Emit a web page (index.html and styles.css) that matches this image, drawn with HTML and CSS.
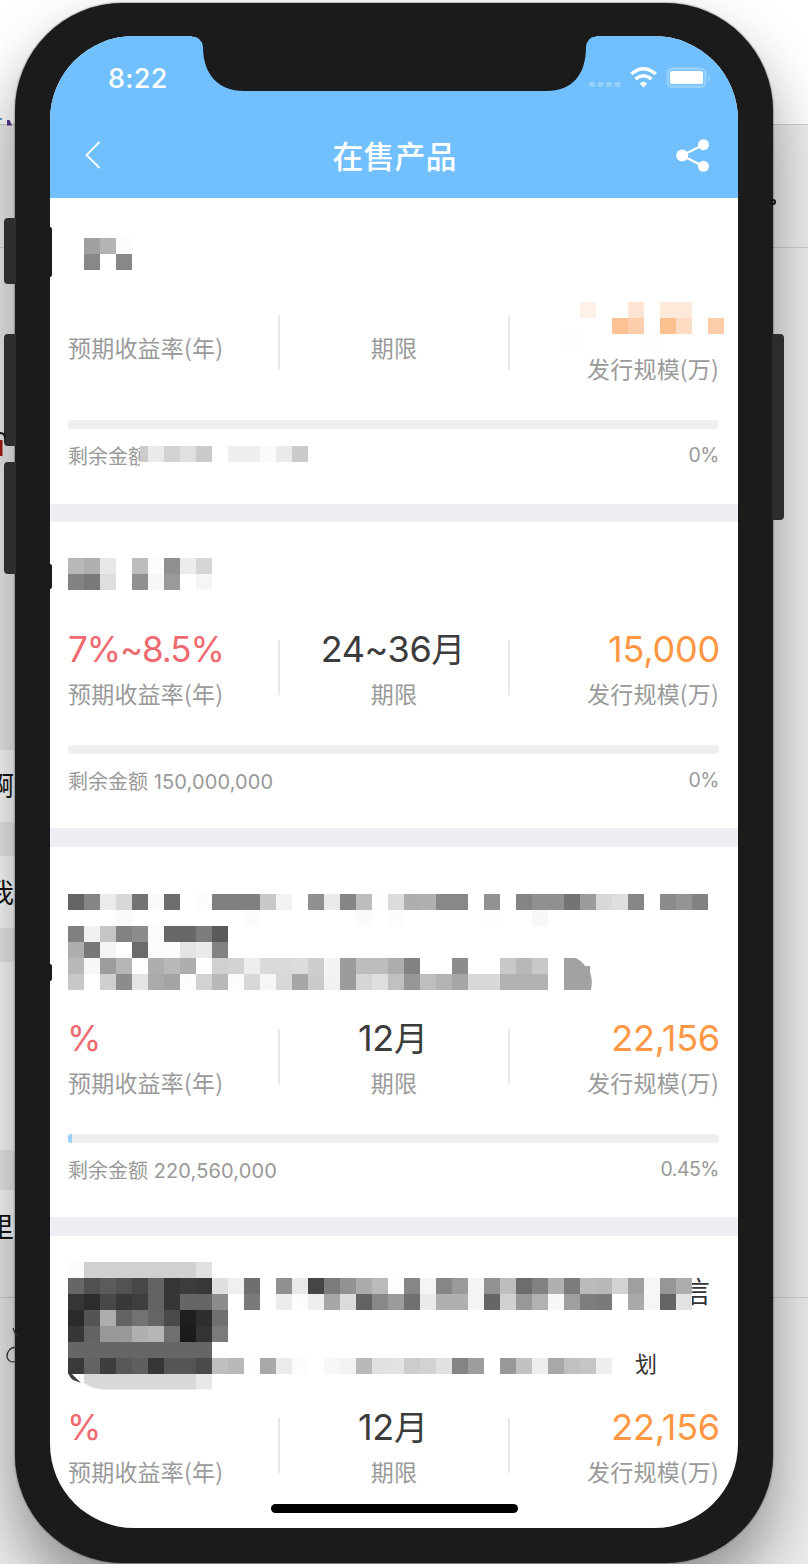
FILE: index.html
```html
<!DOCTYPE html>
<html lang="zh-CN">
<head>
<meta charset="utf-8">
<title>在售产品</title>
<link rel="stylesheet" href="styles.css">
</head>
<body>
<div class="desktop">
  <div class="backdrop">
    <i class="band band-a"></i><i class="band band-b"></i><i class="band band-c"></i><i class="band band-d"></i>
    <i class="rule rule-a"></i><i class="rule rule-b"></i><i class="rule rule-c"></i>
  </div>
  <div class="phone">
    <i class="key key-mute"></i><i class="key key-up"></i><i class="key key-down"></i><i class="key key-power"></i>
    <div class="screen">
      <header class="header">
        <div class="status">
          <span class="time">8:22</span>
          <span class="indicators">
            <svg width="124" height="26" viewBox="0 0 124 26">
              <g fill="#fff" fill-opacity=".25"><rect x="1" y="17" width="6" height="5" rx="1.500"/><rect x="9.500" y="17" width="6" height="5" rx="1.500"/><rect x="18" y="17" width="6" height="5" rx="1.500"/><rect x="26.500" y="17" width="6" height="5" rx="1.500"/></g>
              <g fill="none" stroke="#fff" stroke-width="3.600"><path d="M43.300 9Q55.500-1.500 67.700 9"/><path d="M47.500 14Q55.500 7.500 63.500 14"/></g>
              <path fill="#fff" d="M51.800 18.500Q55.500 15 59.200 18.500L55.500 22.500Z"/>
              <rect x="79.500" y="3.500" width="38" height="18.500" rx="4.500" fill="#fff" fill-opacity=".1" stroke="#fff" stroke-opacity=".25" stroke-width="2"/>
              <rect x="82" y="6" width="33" height="13" rx="2" fill="#fff"/>
              <path d="M120.500 9.500Q124 13 120.500 16.500Z" fill="#fff" fill-opacity=".35"/>
            </svg>
          </span>
        </div>
        <div class="navbar">
          <svg class="back" width="18" height="30" viewBox="0 0 18 30"><path d="M15.500 2L2.500 15l13 13" fill="none" stroke="#fff" stroke-width="1.800"/></svg>
          <h1>在售产品</h1>
          <svg class="share" width="34" height="34" viewBox="0 0 34 34"><path d="M28 6.500L6 17.500l22 11" fill="none" stroke="#fff" stroke-width="2.200"/><g fill="#fff"><circle cx="27.500" cy="6.700" r="5.500"/><circle cx="6.200" cy="17.500" r="6"/><circle cx="27.500" cy="28.300" r="5.500"/></g></svg>
        </div>
      </header>
      <main>
        <section class="card card-first">
          <div class="heading"></div>
          <div class="stats">
            <div class="stat stat-empty"><span class="label">预期收益率(年)</span></div><i class="divider"></i>
            <div class="stat stat-mid stat-empty"><span class="label">期限</span></div><i class="divider"></i>
            <div class="stat stat-end"><b class="value"></b><span class="label">发行规模(万)</span></div>
          </div>
          <div class="bar"></div>
          <div class="foot"><span class="remain">剩余金额</span><span class="percent">0%</span></div>
          <svg class="mosaic" data-name="first"></svg>
        </section>
        <section class="card">
          <div class="heading"></div>
          <div class="stats">
            <div class="stat"><b class="value rate">7%~8.5%</b><span class="label">预期收益率(年)</span></div><i class="divider"></i>
            <div class="stat stat-mid"><b class="value">24~36<span class="month">月</span></b><span class="label">期限</span></div><i class="divider"></i>
            <div class="stat stat-end"><b class="value scale">15,000</b><span class="label">发行规模(万)</span></div>
          </div>
          <div class="bar"></div>
          <div class="foot"><span class="remain">剩余金额 <span class="num">150,000,000</span></span><span class="percent">0%</span></div>
          <svg class="mosaic" data-name="second"></svg>
        </section>
        <section class="card card-tall">
          <div class="heading"></div>
          <div class="stats">
            <div class="stat"><b class="value rate rate-bare">%</b><span class="label">预期收益率(年)</span></div><i class="divider"></i>
            <div class="stat stat-mid"><b class="value">12<span class="month">月</span></b><span class="label">期限</span></div><i class="divider"></i>
            <div class="stat stat-end"><b class="value scale">22,156</b><span class="label">发行规模(万)</span></div>
          </div>
          <div class="bar"><i class="fill" style="width:0.45%"></i></div>
          <div class="foot"><span class="remain">剩余金额 <span class="num">220,560,000</span></span><span class="percent">0.45%</span></div>
          <svg class="mosaic" data-name="third"><path d="M496 111h12q6 3 9 8h5v6q3 8 1 18h-27z" fill="#a2a2a2"/></svg>
        </section>
        <section class="card card-tall card-last">
          <div class="heading"><span class="word word-top">信</span><span class="word word-low">划</span></div>
          <div class="stats">
            <div class="stat"><b class="value rate rate-bare">%</b><span class="label">预期收益率(年)</span></div><i class="divider"></i>
            <div class="stat stat-mid"><b class="value">12<span class="month">月</span></b><span class="label">期限</span></div><i class="divider"></i>
            <div class="stat stat-end"><b class="value scale">22,156</b><span class="label">发行规模(万)</span></div>
          </div>
          <svg class="mosaic" data-name="fourth"><path d="M16 138h112v15.500H34Q23 152 16 147z" fill="#d8d8d8"/><path d="M128 138h16v15.500h-16z" fill="#e8e8e8"/><path d="M0 134l13 13-8-3q-5-4-5-10z" fill="#444"/></svg>
        </section>
      </main>
      <svg class="notch" width="420" height="58" viewBox="0 0 420 58"><path d="M8 0v.5Q18 1 19 11C19 38 34 55 60 55H362C389 55 402 38 402 11Q403 1 412 .500V0Z" fill="#1b1b1b"/></svg>
      <i class="home"></i>
    </div>
    <i class="nub nub-a"></i><i class="nub nub-b"></i><i class="nub nub-c"></i>
  </div>
  <span class="peek peek-a">啊</span><span class="peek peek-b">我</span><span class="peek peek-c">里</span>
  <svg class="marks" width="808" height="1564" viewBox="0 0 808 1564">
    <path d="M0 118h2v2H0z" fill="#4a83bd"/><path d="M7 120h2.500l2.500 5.500H7z" fill="#4b2c7c"/>
    <path d="M0 433q5 0 5 5" stroke="#111" stroke-width="2" fill="none"/><path d="M0 440h2.500v16H0z" fill="#8e1510"/>
    <circle cx="773" cy="202" r="2" fill="none" stroke="#111" stroke-width="2"/>
    <path d="M13 1328q2 6 4 8M16 1347q-9 1-9 10 2 7 9 4" stroke="#333" stroke-width="1.300" fill="none"/>
  </svg>
</div>
<script src="mosaic.js"></script>
</body>
</html>
```
FILE: styles.css
```css
* { box-sizing: border-box; }
body { margin: 0; background: #fff; font-family: Inter, "Noto Sans CJK SC", sans-serif; }
i { font-style: normal; }
.desktop { position: relative; width: 808px; height: 1564px; overflow: hidden; padding: 3px 35px 0 15px; background: #fff; }
.backdrop { position: absolute; inset: 0; background: linear-gradient(#fff 0 124px, #ededed 124px); }
.band { position: absolute; left: 0; width: 15px; background: #fff; }
.band-a { top: 750px; height: 72px; }
.band-b { top: 856px; height: 72px; }
.band-c { top: 962px; height: 188px; }
.band-d { top: 1190px; height: 46px; }
.rule { position: absolute; left: 0; right: 0; height: 1px; background: #cfcfcf; }
.rule-a { top: 124px; }
.rule-b { top: 247px; }
.rule-c { top: 1297px; }

.phone { position: relative; width: 758px; height: 1560px; padding: 33px 35px; border-radius: 108px; background: #1b1b1b; box-shadow: 0 0 2px #333, 0 34px 62px rgba(0, 0, 0, .4); }
.key { position: absolute; width: 12px; background: #2d2d2d; left: -11px; border-radius: 4px 0 0 4px; }
.key-mute { top: 215px; height: 66px; }
.key-up { top: 331px; height: 112px; }
.key-down { top: 459px; height: 112px; }
.key-power { left: 757px; top: 331px; height: 186px; border-radius: 0 4px 4px 0; }
.nub { position: absolute; left: 34px; width: 3px; background: #1b1b1b; border-radius: 0 2px 2px 0; }
.nub-a { top: 224px; height: 50px; }
.nub-b { top: 561px; height: 25px; }
.nub-c { top: 961px; height: 17px; }

.screen { position: relative; width: 688px; height: 1492px; border-radius: 84px; overflow: hidden; background: #fff; }
.header { height: 162px; background: #71c0fd; color: #fff; padding-top: 26px; }
.status { height: 34px; padding: 0 26px 0 58px; display: flex; justify-content: space-between; }
.time { font-size: 27px; line-height: 34px; font-weight: 500; letter-spacing: .3px; }
.indicators { padding-top: 3px; }
.navbar { height: 60px; margin-top: 29px; padding: 0 28px 0 34px; display: grid; grid-template-columns: 60px 1fr 60px; align-items: center; }
.navbar h1 { margin: 0 0 0 -5px; text-align: center; font-size: 31px; line-height: 46px; font-weight: 500; padding-top: 4px; }
.share { justify-self: end; }
.notch { position: absolute; left: 134px; top: 0; }
.home { position: absolute; left: 221px; bottom: 15px; width: 247px; height: 9px; border-radius: 5px; background: #000; }

.card { position: relative; height: 325px; padding: 0 19px 0 18px; border-bottom: 19px solid #efeef5; }
.card-first { height: 324px; border-bottom-width: 18px; }
.card-tall { height: 389px; }
.card-last { border: 0; }
.heading { position: relative; height: 110px; }
.card-first .heading { height: 109px; }
.card-tall .heading { height: 174px; }
.stats { display: grid; grid-template-columns: 210px 2px 228px 2px 1fr; height: 80px; }
.stat { display: flex; flex-direction: column; gap: 12px; margin-top: -1px; }
.stat-mid { align-items: center; }
.stat-end { align-items: flex-end; }
.stat-empty { justify-content: center; }
.divider { height: 55px; margin-top: 8px; background: #e8e8e8; }
.value { display: block; height: 36px; line-height: 37px; font-size: 36px; font-weight: 400; color: #3c3c3c; letter-spacing: -.4px; white-space: nowrap; }
.month { font-size: 34px; line-height: 30px; letter-spacing: 0; }
.stat-mid .value { margin-left: -2px; }
.rate { color: #ee6a70; font-size: 35px; letter-spacing: -1.1px; }
.rate-bare { margin-left: -1px; }
.scale { color: #ff9744; letter-spacing: -.2px; margin-right: -1px; }
.label { height: 28px; line-height: 28px; font-size: 23px; font-weight: 400; color: #9a9a9a; letter-spacing: .2px; font-family: "Noto Sans CJK SC", sans-serif; }
.bar { height: 9px; margin-top: 33px; border-radius: 3px; background: #efefef; overflow: hidden; }
.fill { display: block; height: 100%; min-width: 4px; background: #9bd2fb; }
.foot { display: flex; justify-content: space-between; margin-top: 13px; font-size: 20px; line-height: 26px; color: #999; }
.remain { padding-top: 2px; }
.num { letter-spacing: .15px; }
.percent { font-size: 19.5px; letter-spacing: -.5px; }
.mosaic { position: absolute; left: 18px; top: 0; width: 660px; height: 100%; overflow: visible; pointer-events: none; }
.word { position: absolute; color: #333; line-height: 34px; white-space: nowrap; }
.word-top { left: 613px; top: 40px; font-size: 29px; }
.word-low { left: 567px; top: 111px; font-size: 22px; }
.peek { position: absolute; left: -13px; font-size: 27px; line-height: 36px; color: #111; font-family: "Noto Sans CJK SC", sans-serif; }
.peek-a { top: 767px; }
.peek-b { top: 874px; }
.peek-c { top: 1208px; }
.marks { position: absolute; left: 0; top: 0; }
```
FILE: mosaic.js
```js
// Each row: [x, y, cells]. A cell is a grey level in hex, a full colour, or ".." for a gap.
const mosaics = {
  first: [
    [16, 40, "a0 b4 fb"],
    [16, 56, "88 .. 88"],
    [512, 104, "fff1e8 .. .. fee4d2 .. feead9 fee8da"],
    [496, 136, "fffdfb .. .. .. .. fffdfb"],
    [544, 120, "fec193 fdceab .. fdc08f fddcc4 .. fdcca8"],
    [72, 264, "ff"],
    [72, 248, "cc"],
    [80, 248, "ea d2 e0 cb .. ef ef f9 ea cb"]
  ],
  second: [
    [0, 36, "b8 b0 e8 .. bd fc 90 ec d6"],
    [0, 52, "83 79 de .. 90 f7 9a .. f6"]
  ],
  third: [
    [0, 47, "65 85 eb d8 73 fa 6d .. fc 80 80 80 c8 f3 .. 90 ea 85 bd fe dc ae b0 88 88 .. 92 .. 84 90 90 73 9c d8 df 86 .. 8b 94 82"],
    [0, 63, ".. .. .. fa .. .. .. .. .. .. .. fb .. .. .. .. .. .. fa .. fc .. .. .. .. .. fd .. .. f7"],
    [0, 79, "80 f1 c5 82 8c fb 67 67 7c 5a"],
    [0, 95, "ae 78 f5 .. 6b fb fc e4 ea 82"],
    [0, 111, "b8 f7 9d b6 .. ae b8 ae .. d0 d3 ee da da dc cd f3 9c bd bd ad 82 .. .. 8c .. .. c8 b8 c8"],
    [0, 127, "c7 .. cf 8c e4 aa a4 fc d2 b8 fc d8 f6 d8 a6 cb f1 9c d6 df c0 96 be b4 a6 d8 d8 b2 b2 b2"]
  ],
  fourth: [
    [0, 26, "fc d0 d0 d0 d0 d0 d0 d0 e0"],
    [0, 42, "66 50 5b 52 47 63 35 3c 38 df f0 6f .. 90 e9 45 7c 92 ab ba fe 86 f4 86 9a f4 92 bd 6d 82 b0 7c bb b8 d3 9f f6 96 ad"],
    [0, 58, "35 2c 48 38 3e 63 36 66 66 8c .. 7a .. ec fc ee a6 db 63 88 9b 70 ea b0 b0 f4 66 d1 98 b1 f8 9f 7d 7a .. a9 f6 64 e2"],
    [0, 74, "2a 54 ad 63 72 64 4a 1f 2e 70"],
    [0, 90, "37 63 98 99 b0 b6 70 1b 33 7b"],
    [0, 106, "66 66 66 66 66 66 66 66 66"],
    [0, 122, "3a 63 3d 58 5f 36 55 55 4a bf b9 fe a8 eb fc .. f7 f2 b9 e1 e2 cc d2 e1 84 9d .. 98 c2 ee a8 c0 c5 ee"]
  ]
};

document.querySelectorAll(".mosaic").forEach(svg => {
  for (const [x, y, cells] of mosaics[svg.dataset.name]) {
    cells.split(" ").forEach((cell, i) => {
      if (cell === "..") return;
      const rect = document.createElementNS("http://www.w3.org/2000/svg", "rect");
      rect.setAttribute("x", x + i * 16);
      rect.setAttribute("y", y);
      rect.setAttribute("width", 16);
      rect.setAttribute("height", 16);
      rect.setAttribute("fill", "#" + (cell.length === 2 ? cell.repeat(3) : cell));
      svg.appendChild(rect);
    });
  }
});
```
